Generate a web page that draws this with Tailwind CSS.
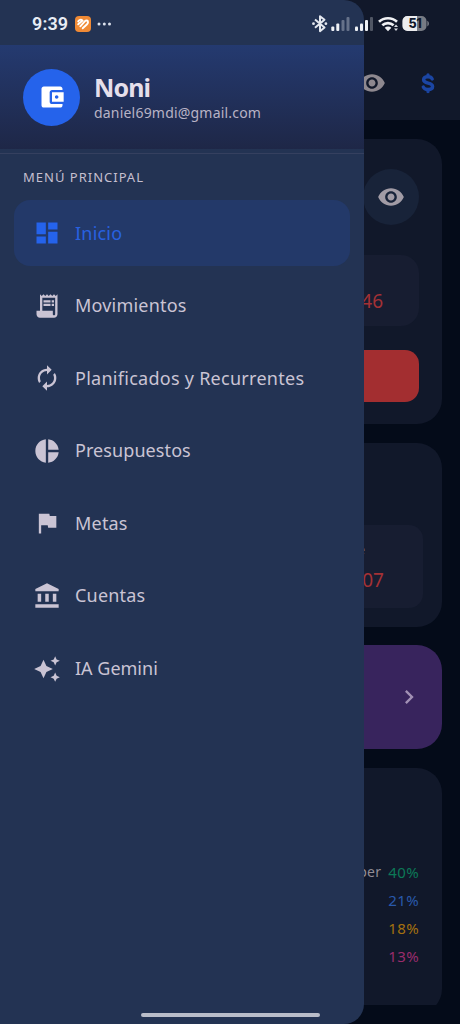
<!DOCTYPE html>
<html lang="es">
<head>
<meta charset="utf-8">
<title>Menú</title>
<script src="https://cdn.jsdelivr.net/npm/@tailwindcss/browser@4"></script>
</head>
<body class="bg-[#040b19]">
<div class="relative w-[460px] h-[1024px] overflow-hidden bg-[#040b19] font-['Noto_Sans',sans-serif]">

  <!-- Dimmed dashboard -->
  <main class="flex h-[1005px] flex-col overflow-hidden">
    <header class="flex h-[120px] shrink-0 items-end justify-end gap-[28px] bg-[#11182a] pr-[18px] pb-[23px]">
      <svg class="size-7 fill-[#8e888f]" viewBox="0 0 24 24"><path d="M12 4.5C7 4.5 2.73 7.61 1 12c1.73 4.39 6 7.5 11 7.5s9.27-3.11 11-7.5c-1.73-4.39-6-7.5-11-7.5zM12 17c-2.76 0-5-2.24-5-5s2.24-5 5-5 5 2.24 5 5-2.24 5-5 5zm0-8c-1.66 0-3 1.34-3 3s1.34 3 3 3 3-1.34 3-3-1.34-3-3-3z"/></svg>
      <svg class="h-7 w-7 fill-none stroke-[#1b45a3]" viewBox="0 0 28 28" stroke-width="3.400" stroke-linecap="round" stroke-linejoin="round"><path d="M18.200 10C17.600 8.400 16.300 7.700 14 7.700c-2.700 0-4.400 1.200-4.400 3 0 4.400 9 2.300 9 6.700 0 2-1.900 3.100-4.600 3.100-2.500 0-4.100-.9-4.700-2.500M14 6v1.500M14 20.500v2"/></svg>
    </header>
    <div class="flex flex-col pr-[18px] pt-[19px]">
      <section class="flex h-[285px] flex-col items-end rounded-r-[25px] bg-[#11182a] pr-[23px] pt-[30px]">
        <div class="flex size-14 shrink-0 items-center justify-center rounded-full bg-[#182339]">
          <svg class="size-7 fill-[#a29ca6]" viewBox="0 0 24 24"><path d="M12 4.500C7 4.500 2.730 7.610 1 12c1.730 4.390 6 7.500 11 7.500s9.270-3.110 11-7.500c-1.730-4.390-6-7.500-11-7.500zM12 17c-2.760 0-5-2.240-5-5s2.240-5 5-5 5 2.240 5 5-2.240 5-5 5zm0-8c-1.660 0-3 1.340-3 3s1.340 3 3 3 3-1.340 3-3-1.340-3-3-3z"/></svg>
        </div>
        <div class="mt-[30px] flex h-[71px] w-[180px] shrink-0 items-end justify-end rounded-[18px] bg-[#171d31] pr-[36px] pb-[12px] text-[19px] leading-[26px] text-[#a33135]">,46</div>
        <div class="mt-[24px] h-[52px] w-[180px] shrink-0 rounded-[14px] bg-[#a32e30]"></div>
      </section>
      <section class="mt-[19px] flex h-[184px] flex-col items-end rounded-r-[25px] bg-[#11182a] pr-[19px] pt-[82px]">
        <div class="flex h-[83px] w-[180px] flex-col items-end rounded-[14px] bg-[#171d31] pr-[39px] pt-[14px]">
          <span class="pr-[19px] text-[13px] leading-[20px] text-[#77747e]">te</span>
          <span class="mt-[8px] text-[19px] leading-[26px] text-[#a33135]">07</span>
        </div>
      </section>
      <section class="mt-[18px] flex h-[104px] items-center justify-end rounded-r-[25px] bg-[#38245d] pr-[19px]">
        <svg class="size-7 fill-[#a291b5]" viewBox="0 0 24 24"><path d="M10 6L8.590 7.410 13.170 12l-4.580 4.590L10 18l6-6z"/></svg>
      </section>
      <section class="mt-[19px] flex h-[246px] flex-col items-end rounded-r-[25px] bg-[#11182a] pr-[23px] pt-[90px] text-[15px] leading-[28px] tracking-[0.400px]">
        <div class="flex gap-[7px]"><span class="text-[14px] tracking-[0.2px] text-[#918c94]">Super</span><span class="text-[#0c7957]">40%</span></div>
        <span class="text-[#2959aa]">21%</span>
        <span class="text-[#a4700f]">18%</span>
        <span class="text-[#9a2c6c]">13%</span>
      </section>
    </div>
  </main>

  <!-- Drawer -->
  <aside class="absolute inset-y-0 left-0 flex w-[364px] flex-col overflow-hidden rounded-r-[20px] bg-[#233353]">
    <div class="mt-[45px] flex h-[104px] shrink-0 items-center gap-[14px] bg-linear-to-b from-[#243a70] to-[#1e2747] pl-[23px]">
      <div class="flex size-[57px] items-center justify-center rounded-full bg-[#2563eb]">
        <svg class="size-[28px] fill-white" viewBox="0 0 24 24"><path d="M21 18v1c0 1.100-.9 2-2 2H5c-1.110 0-2-.9-2-2V5c0-1.100.890-2 2-2h14c1.100 0 2 .9 2 2v1h-9c-1.110 0-2 .9-2 2v8c0 1.100.890 2 2 2h9zm-9-2h10V8H12v8zm4-2.500c-.830 0-1.500-.670-1.500-1.500s.670-1.500 1.500-1.500 1.500.670 1.500 1.500-.670 1.500-1.500 1.500z"/></svg>
      </div>
      <div class="flex flex-col pt-[2px]">
        <span class="text-[25px] leading-[28px] font-bold tracking-[-0.9px] text-[#e5dfeb]">Noni</span>
        <span class="mt-[2px] text-[14px] leading-[20px] tracking-[0.2px] text-[#b8b3c5]">daniel69mdi@gmail.com</span>
      </div>
    </div>
    <div class="mt-[4px] h-px shrink-0 bg-[#35405f]"></div>
    <h2 class="mt-[14px] pl-[23px] text-[13px] leading-[19px] tracking-[1px] text-[#c5bfcf]">MENÚ PRINCIPAL</h2>
    <nav class="mx-[14px] mt-[13px] flex flex-col gap-[6.600px] text-[18px] tracking-[0.2px] text-[#cac4d4]">
      <a class="flex h-[66px] items-center gap-[14px] rounded-[16px] bg-[#233969] pl-[19px] text-[#2861e0]"><svg class="size-7 fill-[#2563eb]" viewBox="0 0 24 24"><path d="M3 13h8V3H3v10zm0 8h8v-6H3v6zm10 0h8V11h-8v10zm0-18v6h8V3h-8z"/></svg><span>Inicio</span></a>
      <a class="flex h-[66px] items-center gap-[14px] pl-[19px]"><svg class="size-7 fill-current" viewBox="0 0 24 24"><path d="M19.500 3.500L18 2l-1.500 1.500L15 2l-1.500 1.500L12 2l-1.500 1.500L9 2 7.500 3.500 6 2v14H3v3c0 1.660 1.340 3 3 3h12c1.660 0 3-1.340 3-3V2l-1.500 1.500zM19 19c0 .550-.450 1-1 1s-1-.450-1-1v-3H8V5h11v14zM9 7h6v2H9zM16 7h2v2h-2zM9 10h6v2H9zM16 10h2v2h-2z"/></svg><span>Movimientos</span></a>
      <a class="flex h-[66px] items-center gap-[14px] pl-[19px]"><svg class="size-7 fill-current" viewBox="0 0 24 24"><path d="M12 6v3l4-4-4-4v3c-4.420 0-8 3.580-8 8 0 1.570.460 3.030 1.240 4.260L6.700 14.800c-.450-.830-.700-1.790-.700-2.800 0-3.310 2.690-6 6-6zm6.760 1.740L17.300 9.200c.440.840.700 1.790.700 2.800 0 3.310-2.690 6-6 6v-3l-4 4 4 4v-3c4.420 0 8-3.580 8-8 0-1.570-.460-3.030-1.240-4.260z"/></svg><span class="tracking-[0.270px]">Planificados y Recurrentes</span></a>
      <a class="flex h-[66px] items-center gap-[14px] pl-[19px]"><svg class="size-7 fill-current" viewBox="0 0 24 24"><path d="M11 2v20c-5.070-.5-9-4.790-9-10s3.930-9.500 9-10zm2.030 0v8.990H22c-.470-4.740-4.240-8.520-8.970-8.990zm0 11.010V22c4.740-.470 8.500-4.250 8.970-8.990h-8.970z"/></svg><span class="tracking-[0.080px]">Presupuestos</span></a>
      <a class="flex h-[66px] items-center gap-[14px] pl-[19px]"><svg class="size-7 fill-current" viewBox="0 0 24 24"><path d="M14.400 6L14 4H5v17h2v-7h5.600l.4 2h7V6z"/></svg><span>Metas</span></a>
      <a class="flex h-[66px] items-center gap-[14px] pl-[19px]"><svg class="size-7 fill-current" viewBox="0 0 24 24"><path d="M12 1L2 6v2h20V6zM4 10h3v7H4zM10.500 10h3v7h-3zM17 10h3v7h-3zM2 19h20v3H2z"/></svg><span>Cuentas</span></a>
      <a class="flex h-[66px] items-center gap-[14px] pl-[19px]"><svg class="size-7 fill-current" viewBox="0 0 24 24"><path d="M19 9l1.250-2.750L23 5l-2.750-1.250L19 1l-1.250 2.750L15 5l2.750 1.250L19 9zm-7.500.5L9 4 6.500 9.500 1 12l5.500 2.500L9 20l2.500-5.500L17 12l-5.500-2.500zM19 15l-1.250 2.750L15 19l2.750 1.250L19 23l1.250-2.750L23 19l-2.750-1.250L19 15z"/></svg><span class="tracking-normal">IA Gemini</span></a>
    </nav>
  </aside>

  <!-- System status bar -->
  <div class="absolute inset-x-0 top-0 flex h-12 items-center pl-[32px] pr-[30px]">
    <span class="w-[37px] font-['Roboto',sans-serif] text-[18px] font-semibold leading-none tracking-[0.1px] text-[#e8edf5]">9:39</span>
    <svg class="ml-[6px] size-4" viewBox="0 0 16 16"><rect width="16" height="16" rx="4" fill="#f08a35"/><path d="M3.200 8.300L7.600 4.600C6.100 3.200 3.900 3.700 3.200 5.400M5.300 10.300L10 5.200c1.200-1.300 3.200-.9 3 1.200-.1 1-.8 1.700-1.500 2.400L7.700 12.300" fill="none" stroke="#fff" stroke-width="1.900" stroke-linecap="round" stroke-linejoin="round"/></svg>
    <svg class="ml-[6px] h-1 w-4" viewBox="0 0 16 4" fill="#dbe1ec"><circle cx="2" cy="2" r="1.500"/><circle cx="7.300" cy="2" r="1.500"/><circle cx="12.500" cy="2" r="1.500"/></svg>
    <svg class="ml-auto h-5 w-[120px]" viewBox="310 14 120 20">
      <path d="M315 19.500l9.500 8-4.500 3.700v-15l4.500 3.500-9.500 8" fill="none" stroke="#e4e8ef" stroke-width="2" stroke-linejoin="round"/>
      <circle cx="313.500" cy="23.700" r="1.400" fill="#e4e8ef"/><circle cx="325.900" cy="23.700" r="1.400" fill="#e4e8ef"/>
      <g fill="#eef1f6"><rect x="331.300" y="26.500" width="3" height="4.500" rx="1"/><rect x="336.300" y="23.500" width="3" height="7.500" rx="1"/><rect x="355" y="26.500" width="3" height="4.500" rx="1"/><rect x="360" y="23.500" width="3" height="7.500" rx="1"/><rect x="365" y="20" width="3" height="11" rx="1"/></g>
      <g fill="#66728a"><rect x="341.500" y="20" width="3" height="11" rx="1"/><rect x="346.500" y="17" width="3" height="14" rx="1"/></g>
      <rect x="370" y="17" width="3" height="14" rx="1" fill="#505664"/>
      <g fill="none" stroke="#f0f1f4" stroke-width="2.700"><path d="M379 21.700c5-4.600 13-4.600 18 0"/><path d="M382.300 25.300c3.300-3 8-3 11.300 0"/></g><path d="M384.700 27.800c2-1.700 4.700-1.700 6.700 0L388 31.300z" fill="#f0f1f4"/>
      <path d="M394 27l2-2.500 2 2.500zM394 28.500l2 2.500 2-2.500z" fill="#d8dae0"/>
      <path d="M407.500 16h14a5 5 0 0 1 5 5v5a5 5 0 0 1-5 5h-14a5 5 0 0 1-5-5v-5a5 5 0 0 1 5-5z" fill="#777b84"/><path d="M407.500 16h9.500v15h-9.500a5 5 0 0 1-5-5v-5a5 5 0 0 1 5-5z" fill="#ececee"/><path d="M427.300 20.800c2.200 1 2.200 4.600 0 5.600z" fill="#777b84"/>
      <text x="408.500" y="28.100" font-family="Inter" font-size="12.500" font-weight="800" letter-spacing="-0.500" fill="#11182a">51</text>
    </svg>
  </div>

  <!-- Gesture handle -->
  <div class="absolute bottom-[7px] left-[141px] h-1 w-[179px] rounded-full bg-[#b9bdc9]"></div>
</div>
</body>
</html>
